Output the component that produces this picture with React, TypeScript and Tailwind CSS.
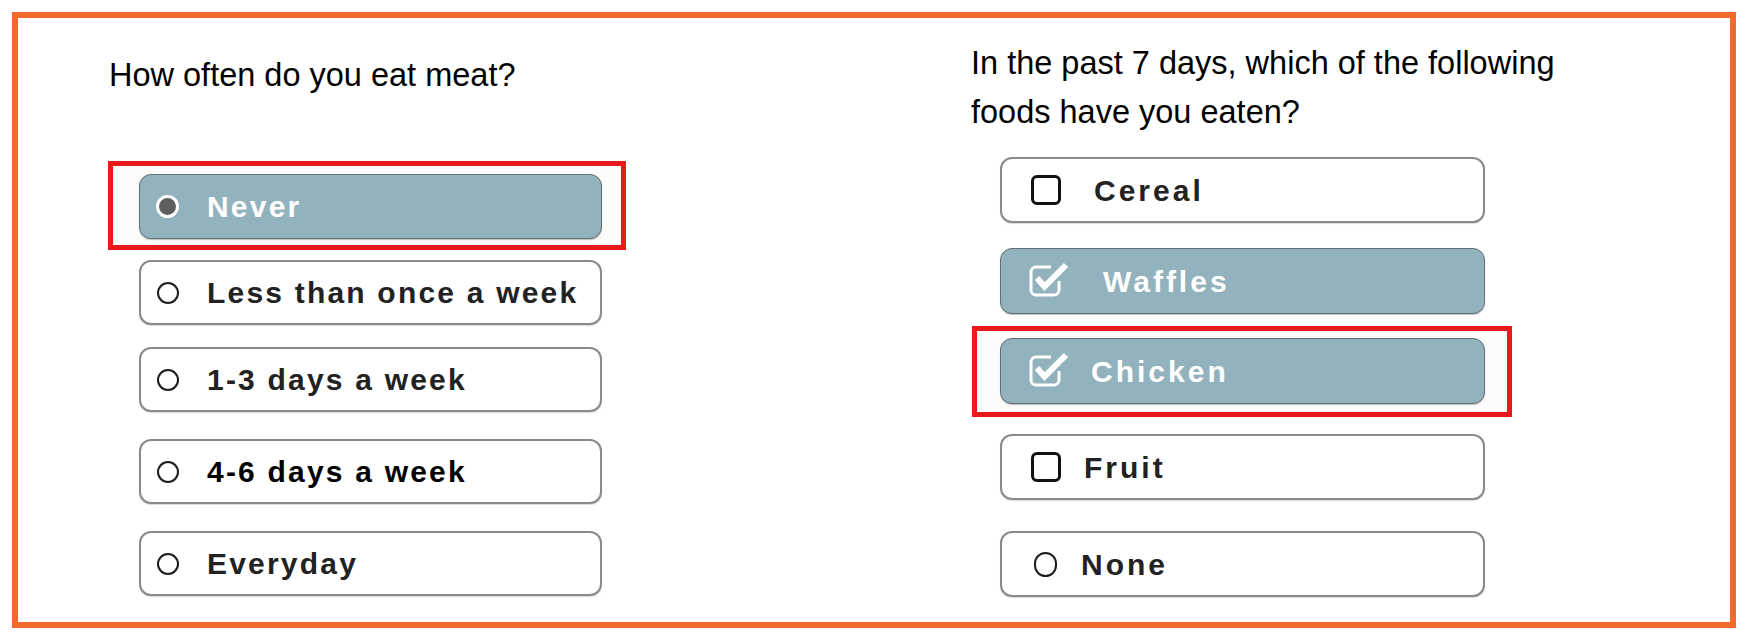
import React from "react";

type Choice = {
  label: string;
  selected?: boolean;
  mark: "radio" | "box" | "circle";
  mt: string;
  gap: string;
  highlight?: boolean;
};

const meatChoices: Choice[] = [
  { label: "Never", selected: true, mark: "radio", mt: "mt-0", gap: "ml-[28px]", highlight: true },
  { label: "Less than once a week", mark: "radio", mt: "mt-[21px]", gap: "ml-[28px]" },
  { label: "1-3 days a week", mark: "radio", mt: "mt-[22px]", gap: "ml-[28px]" },
  { label: "4-6 days a week", mark: "radio", mt: "mt-[27px]", gap: "ml-[28px]" },
  { label: "Everyday", mark: "radio", mt: "mt-[27px]", gap: "ml-[28px]" },
];

const foodChoices: Choice[] = [
  { label: "Cereal", mark: "box", mt: "mt-0", gap: "ml-[33px]" },
  { label: "Waffles", selected: true, mark: "box", mt: "mt-[25px]", gap: "ml-[32px]" },
  { label: "Chicken", selected: true, mark: "box", mt: "mt-[24px]", gap: "ml-[20px]", highlight: true },
  { label: "Fruit", mark: "box", mt: "mt-[30px]", gap: "ml-[23px]" },
  { label: "None", mark: "circle", mt: "mt-[31px]", gap: "ml-[24px]" },
];

const CheckedIcon: React.FC = () => (
  <svg width="42" height="36" viewBox="0 0 42 36" className="shrink-0">
    <path
      d="M22 6 H7 A5 5 0 0 0 2 11 V29 A5 5 0 0 0 7 34 H25 A5 5 0 0 0 30 29 V20"
      fill="none"
      stroke="#ffffff"
      strokeWidth="3"
    />
    <polyline
      points="8,17 15.5,25.5 37,4"
      fill="none"
      stroke="#ffffff"
      strokeWidth="6"
      strokeLinejoin="miter"
    />
  </svg>
);

const Mark: React.FC<{ choice: Choice }> = ({ choice }) => {
  if (choice.mark === "radio") {
    return choice.selected ? (
      <span className="ml-[16px] w-[23px] h-[23px] rounded-full bg-[#5e5e5e] border-[3px] border-white shrink-0" />
    ) : (
      <span className="ml-[16px] w-[22px] h-[22px] rounded-full bg-white border-2 border-[#1c1c1c] shrink-0" />
    );
  }
  if (choice.mark === "circle") {
    return <span className="ml-[32px] w-[23px] h-[25px] rounded-full bg-white border-[2.5px] border-[#1c1c1c] shrink-0" />;
  }
  return choice.selected ? (
    <span className="ml-[28px] -mt-[4px] flex">
      <CheckedIcon />
    </span>
  ) : (
    <span className="ml-[29px] w-[30px] h-[30px] rounded-[6px] border-[3px] border-[#111] bg-white shrink-0" />
  );
};

const OptionRow: React.FC<{ choice: Choice; height: string; tracking: string }> = ({
  choice,
  height,
  tracking,
}) => {
  const box = (
    <div
      className={
        "flex items-center rounded-[12px] " +
        height +
        (choice.selected
          ? " bg-[#92b2bd] border-[1.5px] border-[#5f7177] shadow-[0_1px_1px_rgba(0,0,0,0.25)]"
          : " bg-white border-2 border-[#8a8a8a] shadow-[0_1px_1px_rgba(0,0,0,0.15)]")
      }
    >
      <Mark choice={choice} />
      <span
        className={
          "font-bold text-[30px] " +
          tracking +
          " " +
          choice.gap +
          (choice.selected ? " text-white" : choice.label.startsWith("4-6") ? " text-black" : " text-[#222]")
        }
      >
        {choice.label}
      </span>
    </div>
  );

  if (!choice.highlight) return <div className={choice.mt}>{box}</div>;

  // red annotation frame, kept out of the flow size with negative margins
  return (
    <div className={choice.mt}>
      {choice.mark === "radio" ? (
        <div className="-ml-[31px] -mr-[24px] -mt-[13px] -mb-[11px] border-[5px] border-[#e8191b] bg-[#fbfbf9] pl-[26px] pr-[19px] pt-[8px] pb-[6px]">
          {box}
        </div>
      ) : (
        <div className="-ml-[28px] -mr-[27px] -mt-[12px] -mb-[13px] border-[5px] border-[#e8191b] bg-[#fbfbf9] pl-[23px] pr-[22px] pt-[7px] pb-[8px]">
          {box}
        </div>
      )}
    </div>
  );
};

const App: React.FC = () => {
  return (
    <div
      className="w-[1750px] h-[640px] bg-white pt-[12px] pl-[12px]"
      style={{ fontFamily: '"Liberation Sans", Arial, sans-serif' }}
    >
      <div className="w-[1724px] h-[616px] border-[6px] border-[#f36b2a] flex pl-[91px]">
        {/* left question */}
        <div className="w-[862px] pt-[37px]">
          <p className="text-[32.5px] leading-[40px] text-black">How often do you eat meat?</p>
          <div className="ml-[30px] w-[463px] mt-[79px]">
            {meatChoices.map((c) => (
              <OptionRow key={c.label} choice={c} height="h-[65px]" tracking="tracking-[2.2px]" />
            ))}
          </div>
        </div>

        {/* right question */}
        <div className="pt-[21px]">
          <p className="text-[32.5px] leading-[49px] text-black">
            In the past 7 days, which of the following
            <br />
            foods have you eaten?
          </p>
          <div className="ml-[29px] w-[485px] mt-[20px]">
            {foodChoices.map((c) => (
              <OptionRow key={c.label} choice={c} height="h-[66px]" tracking="tracking-[3px]" />
            ))}
          </div>
        </div>
      </div>
    </div>
  );
};

export default App;
